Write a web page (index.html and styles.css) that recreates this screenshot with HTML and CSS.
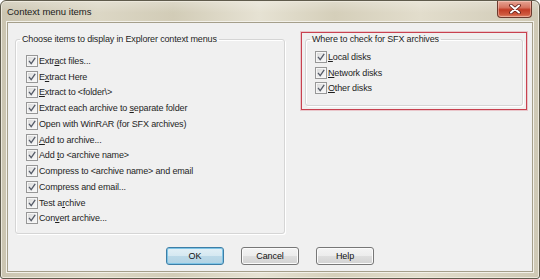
FILE: index.html
```html
<!DOCTYPE html>
<html>
<head>
<meta charset="utf-8">
<title>Context menu items</title>
<link rel="stylesheet" href="styles.css">
</head>
<body>
<div class="window">
  <div class="titlebar">
    <span class="title">Context menu items</span>
    <button class="close" aria-label="Close">
      <svg width="12" height="10" viewBox="0 0 12 10">
        <path d="M2 1.5 L10 8.5 M10 1.5 L2 8.5" stroke="#5a1b14" stroke-width="3.6" stroke-linecap="round"/>
        <path d="M2 1.5 L10 8.5 M10 1.5 L2 8.5" stroke="#ffffff" stroke-width="2" stroke-linecap="round"/>
      </svg>
    </button>
  </div>
  <div class="client">
    <div class="groups">
      <fieldset class="group group-left">
        <legend>Choose items to display in Explorer context menus</legend>
        <div class="rows">
          <label class="row"><span class="cb"><svg viewBox="0 0 10 10"><path d="M2 4.8 L4.2 7.6 L8.2 1.8"/></svg></span><span>Extr<u>a</u>ct files...</span></label>
          <label class="row"><span class="cb"><svg viewBox="0 0 10 10"><path d="M2 4.8 L4.2 7.6 L8.2 1.8"/></svg></span><span>E<u>x</u>tract Here</span></label>
          <label class="row"><span class="cb"><svg viewBox="0 0 10 10"><path d="M2 4.8 L4.2 7.6 L8.2 1.8"/></svg></span><span><u>E</u>xtract to &lt;folder\&gt;</span></label>
          <label class="row"><span class="cb"><svg viewBox="0 0 10 10"><path d="M2 4.8 L4.2 7.6 L8.2 1.8"/></svg></span><span>Extract each archive to <u>s</u>eparate folder</span></label>
          <label class="row"><span class="cb"><svg viewBox="0 0 10 10"><path d="M2 4.8 L4.2 7.6 L8.2 1.8"/></svg></span><span>Open with WinRAR (for SFX archives)</span></label>
          <label class="row"><span class="cb"><svg viewBox="0 0 10 10"><path d="M2 4.8 L4.2 7.6 L8.2 1.8"/></svg></span><span><u>A</u>dd to archive...</span></label>
          <label class="row"><span class="cb"><svg viewBox="0 0 10 10"><path d="M2 4.8 L4.2 7.6 L8.2 1.8"/></svg></span><span>Add <u>t</u>o &lt;archive name&gt;</span></label>
          <label class="row"><span class="cb"><svg viewBox="0 0 10 10"><path d="M2 4.8 L4.2 7.6 L8.2 1.8"/></svg></span><span>Compress to &lt;archive name&gt; and email</span></label>
          <label class="row"><span class="cb"><svg viewBox="0 0 10 10"><path d="M2 4.8 L4.2 7.6 L8.2 1.8"/></svg></span><span>Compress and email...</span></label>
          <label class="row"><span class="cb"><svg viewBox="0 0 10 10"><path d="M2 4.8 L4.2 7.6 L8.2 1.8"/></svg></span><span>Test a<u>r</u>chive</span></label>
          <label class="row"><span class="cb"><svg viewBox="0 0 10 10"><path d="M2 4.8 L4.2 7.6 L8.2 1.8"/></svg></span><span>Con<u>v</u>ert archive...</span></label>
        </div>
      </fieldset>
      <div class="highlight">
        <fieldset class="group group-right">
          <legend>Where to check for SFX archives</legend>
          <div class="rows rows-right">
            <label class="row"><span class="cb"><svg viewBox="0 0 10 10"><path d="M2 4.8 L4.2 7.6 L8.2 1.8"/></svg></span><span><u>L</u>ocal disks</span></label>
            <label class="row"><span class="cb"><svg viewBox="0 0 10 10"><path d="M2 4.8 L4.2 7.6 L8.2 1.8"/></svg></span><span><u>N</u>etwork disks</span></label>
            <label class="row"><span class="cb"><svg viewBox="0 0 10 10"><path d="M2 4.8 L4.2 7.6 L8.2 1.8"/></svg></span><span><u>O</u>ther disks</span></label>
          </div>
        </fieldset>
      </div>
    </div>
    <div class="buttons">
      <button class="btn btn-default">OK</button>
      <button class="btn">Cancel</button>
      <button class="btn">Help</button>
    </div>
  </div>
</div>
</body>
</html>
```
FILE: styles.css
```css
* { box-sizing: border-box; }
html, body { margin: 0; padding: 0; }
body {
  width: 540px;
  height: 279px;
  background: #ffffff;
  font-family: "Liberation Sans", Arial, sans-serif;
  font-size: 9px;
  letter-spacing: -0.15px;
  color: #1e1e1e;
}
.window {
  width: 540px;
  height: 279px;
  display: flex;
  flex-direction: column;
  border: 1px solid #5f5b4c;
  border-radius: 6px 6px 3px 3px;
  padding: 0 6px 6px 6px;
  background:
    linear-gradient(180deg, rgba(255,255,255,0.25) 0%, rgba(255,255,255,0) 12px),
    linear-gradient(90deg, #cbc5b1 0%, #dcd7c5 18%, #d2ccb7 32%, #e6e2d3 48%, #d5cfba 62%, #e2ddcc 78%, #cfc9b5 100%);
  box-shadow: inset 0 0 0 1px #ece8dc;
}
.titlebar {
  height: 21px;
  display: flex;
  align-items: flex-start;
  justify-content: space-between;
}
.title {
  padding-top: 5px;
  font-size: 9.5px;
  letter-spacing: 0;
  color: #1a1a1a;
}
.close {
  width: 35px;
  height: 17px;
  margin: 0 1px 0 0;
  padding: 0;
  border: 1px solid #6c3a2e;
  border-top: none;
  border-radius: 0 0 4px 4px;
  background: linear-gradient(180deg, #e6a493 0%, #d77662 40%, #c23c25 55%, #cf5a3f 85%, #e08a6c 100%);
  box-shadow: inset 0 0 0 1px rgba(255,220,210,0.45);
  display: flex;
  align-items: center;
  justify-content: center;
}
.client {
  flex: 1;
  display: flex;
  flex-direction: column;
  background: #f0f0f0;
  border: 1px solid #a59f8b;
  box-shadow: 0 0 0 1px #f3f1ea;
}
.groups {
  display: flex;
  align-items: flex-start;
  padding: 10px 0 0 7px;
}
.group {
  margin: 0;
  border: 1px solid #d5d5d5;
  border-radius: 3px;
  box-shadow: inset 1px 1px 0 #ffffff, 1px 1px 0 #ffffff;
  min-width: 0;
}
.group legend {
  padding: 0 2px;
  line-height: 13px;
  font-size: 9px;
}
.group-left {
  width: 270px;
  height: 201px;
  padding: 0 0 0 4px;
}
.rows {
  display: flex;
  flex-direction: column;
  padding: 7px 0 0 6px;
}
.rows-right {
  padding: 3px 0 0 5px;
}
.row {
  height: 15.75px;
  display: flex;
  align-items: center;
  white-space: nowrap;
}
.row u { text-decoration-thickness: 1px; text-underline-offset: 1px; }
.cb {
  width: 12px;
  height: 12px;
  margin-right: 1px;
  flex: none;
  border: 1px solid #979797;
  background: linear-gradient(135deg, #d6d6d6 0%, #ececec 55%, #fbfbfb 100%);
  box-shadow: inset 0 0 0 1px #f6f6f6;
  display: flex;
  align-items: center;
  justify-content: center;
}
.cb svg {
  width: 10px;
  height: 10px;
  fill: none;
  stroke: #555b68;
  stroke-width: 1.3;
}
.highlight {
  margin: -1px 0 0 16px;
  width: 226px;
  height: 78px;
  border: 1px solid #c8414f;
  box-shadow: 0 0 0 1px rgba(220, 120, 135, 0.35);
  padding: 0 3px 3px 3px;
}
.group-right {
  width: 100%;
  height: 100%;
  padding: 0 0 0 4px;
}
.buttons {
  display: flex;
  justify-content: center;
  gap: 17px;
  margin-top: 13px;
}
.btn {
  width: 58px;
  height: 18px;
  padding: 0;
  font-family: inherit;
  font-size: 9px;
  letter-spacing: -0.1px;
  color: #111;
  border: 1px solid #777777;
  border-radius: 3px;
  background: linear-gradient(180deg, #f4f4f4 0%, #ececec 50%, #dedede 51%, #d2d2d2 100%);
  box-shadow: inset 0 0 0 1px #fbfbfb;
}
.btn-default {
  border-color: #3d7ea6;
  background: linear-gradient(180deg, #e3f0f6 0%, #d5e8f1 50%, #bcd9e8 51%, #b2d3e4 100%);
  box-shadow: inset 0 0 0 1px #7ec4e6;
}
```
